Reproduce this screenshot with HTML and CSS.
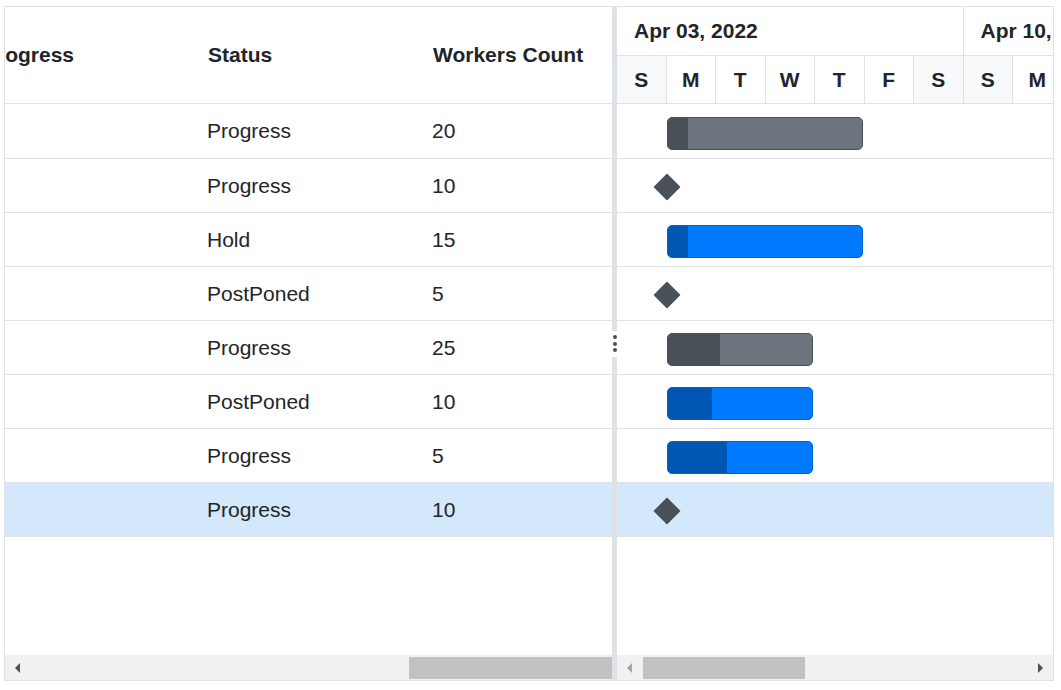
FILE: index.html
```html
<!DOCTYPE html>
<html lang="en">
<head>
<meta charset="utf-8">
<title>Gantt</title>
<link rel="stylesheet" href="styles.css">
</head>
<body>
<div class="gantt">
  <div class="grid-pane">
    <div class="grid-clip">
      <div class="grid-inner">
        <div class="g-header">
          <div class="g-cell">Progress</div>
          <div class="g-cell">Status</div>
          <div class="g-cell">Workers Count</div>
        </div>
        <div class="g-row first"><div class="g-cell"></div><div class="g-cell">Progress</div><div class="g-cell">20</div></div>
        <div class="g-row"><div class="g-cell"></div><div class="g-cell">Progress</div><div class="g-cell">10</div></div>
        <div class="g-row"><div class="g-cell"></div><div class="g-cell">Hold</div><div class="g-cell">15</div></div>
        <div class="g-row"><div class="g-cell"></div><div class="g-cell">PostPoned</div><div class="g-cell">5</div></div>
        <div class="g-row"><div class="g-cell"></div><div class="g-cell">Progress</div><div class="g-cell">25</div></div>
        <div class="g-row"><div class="g-cell"></div><div class="g-cell">PostPoned</div><div class="g-cell">10</div></div>
        <div class="g-row"><div class="g-cell"></div><div class="g-cell">Progress</div><div class="g-cell">5</div></div>
        <div class="g-row selected"><div class="g-cell"></div><div class="g-cell">Progress</div><div class="g-cell">10</div></div>
      </div>
    </div>
    <div class="filler"></div>
    <div class="hscroll">
      <div class="sb-btn"><span class="arr-left dark"></span></div>
      <div class="sb-thumb grid-thumb"></div>
    </div>
  </div>

  <div class="splitter">
    <div class="handle"><span class="dot"></span><span class="dot"></span><span class="dot"></span></div>
  </div>

  <div class="chart-pane">
    <div class="chart-clip">
      <div class="c-header">
        <div class="weeks">
          <div class="week">Apr 03, 2022</div>
          <div class="week">Apr 10, 2022</div>
        </div>
        <div class="days">
          <div class="day weekend">S</div><div class="day">M</div><div class="day">T</div><div class="day">W</div><div class="day">T</div><div class="day">F</div><div class="day weekend">S</div>
          <div class="day weekend">S</div><div class="day">M</div><div class="day">T</div><div class="day">W</div><div class="day">T</div><div class="day">F</div><div class="day weekend">S</div>
        </div>
      </div>
      <div class="c-row first">
        <div class="bar gray" style="margin-left:50px;width:196px"><div class="prog" style="width:20px"></div></div>
      </div>
      <div class="c-row">
        <svg class="milestone" style="margin-left:36px" width="28" height="28" viewBox="0 0 28 28"><polygon points="14,1.5 26.5,14 14,26.5 1.5,14"/></svg>
      </div>
      <div class="c-row">
        <div class="bar blue" style="margin-left:50px;width:196px"><div class="prog" style="width:20px"></div></div>
      </div>
      <div class="c-row">
        <svg class="milestone" style="margin-left:36px" width="28" height="28" viewBox="0 0 28 28"><polygon points="14,1.5 26.5,14 14,26.5 1.5,14"/></svg>
      </div>
      <div class="c-row">
        <div class="bar gray" style="margin-left:50px;width:146px"><div class="prog" style="width:52px"></div></div>
      </div>
      <div class="c-row">
        <div class="bar blue" style="margin-left:50px;width:146px"><div class="prog" style="width:44px"></div></div>
      </div>
      <div class="c-row">
        <div class="bar blue" style="margin-left:50px;width:146px"><div class="prog" style="width:59px"></div></div>
      </div>
      <div class="c-row selected">
        <svg class="milestone" style="margin-left:36px" width="28" height="28" viewBox="0 0 28 28"><polygon points="14,1.5 26.5,14 14,26.5 1.5,14"/></svg>
      </div>
    </div>
    <div class="filler"></div>
    <div class="hscroll">
      <div class="sb-btn"><span class="arr-left light"></span></div>
      <div class="sb-thumb chart-thumb"></div>
      <div class="sb-btn end"><span class="arr-right dark"></span></div>
    </div>
  </div>
</div>
</body>
</html>
```

FILE: styles.css
```css
* { box-sizing: border-box; }

body {
  margin: 0;
  background: #ffffff;
  font-family: "Liberation Sans", Arial, sans-serif;
  color: #212529;
}

.gantt {
  margin: 6px 0 0 4px;
  width: 1050px;
  height: 675px;
  border: 1px solid #dee2e6;
  display: flex;
  background: #ffffff;
}

/* ---------- grid pane ---------- */
.grid-pane {
  width: 607px;
  flex: none;
  display: flex;
  flex-direction: column;
  overflow: hidden;
}

.grid-clip {
  overflow: hidden;
}

.grid-inner {
  margin-left: -34px;
  width: 675px;
}

.g-header,
.g-row {
  display: flex;
  border-bottom: 1px solid #dee2e6;
}

.g-header {
  height: 97px;
  font-weight: bold;
  font-size: 21px;
}

.g-row {
  height: 54px;
  font-size: 21px;
}

.g-row .g-cell { padding-left: 11px; }

.g-row.first { height: 55px; }

.g-row.selected { background: #d4e8fc; }

.g-cell {
  width: 225px;
  flex: none;
  padding: 0 12px;
  display: flex;
  align-items: center;
  white-space: nowrap;
  overflow: hidden;
}

.filler { flex: 1; }

/* ---------- scrollbars ---------- */
.hscroll {
  height: 25px;
  flex: none;
  background: #f1f1f1;
  display: flex;
  align-items: stretch;
}

.sb-btn {
  width: 25px;
  flex: none;
  display: flex;
  align-items: center;
  justify-content: center;
}

.sb-btn.end { margin-left: auto; }

.sb-thumb {
  background: #c1c1c1;
  margin-top: 2px;
  margin-bottom: 1px;
}

.grid-thumb {
  margin-left: auto;
  width: 203px;
}

.chart-thumb {
  margin-left: 1px;
  width: 162px;
}

.arr-left,
.arr-right {
  width: 0;
  height: 0;
  border-top: 5px solid transparent;
  border-bottom: 5px solid transparent;
}

.arr-left { border-right: 5px solid #505050; }
.arr-right { border-left: 5px solid #505050; }
.arr-left.light { border-right-color: #a3a3a3; }

/* ---------- splitter ---------- */
.splitter {
  width: 5px;
  flex: none;
  background: #dee2e6;
  position: relative;
}

.handle {
  position: absolute;
  left: 0;
  top: 50%;
  transform: translateY(-50%);
  width: 5px;
  height: 26px;
  background: #ffffff;
  display: flex;
  flex-direction: column;
  align-items: center;
  justify-content: center;
  gap: 2.5px;
}

.dot {
  width: 4px;
  height: 4px;
  border-radius: 50%;
  background: #495057;
}

/* ---------- chart pane ---------- */
.chart-pane {
  flex: 1;
  min-width: 0;
  display: flex;
  flex-direction: column;
  overflow: hidden;
}

.chart-clip { overflow: hidden; }

.c-header {
  font-weight: bold;
  font-size: 21px;
}

.weeks,
.days {
  display: flex;
  width: 693px;
}

.week {
  width: 346.5px;
  flex: none;
  height: 49px;
  padding-left: 17px;
  display: flex;
  align-items: center;
  border-right: 1px solid #dee2e6;
  border-bottom: 1px solid #dee2e6;
  white-space: nowrap;
}

.day {
  width: 49.5px;
  flex: none;
  height: 48px;
  display: flex;
  align-items: center;
  justify-content: center;
  border-right: 1px solid #dee2e6;
  border-bottom: 1px solid #dee2e6;
}

.day.weekend { background: #f8f9fa; }

.c-row {
  height: 54px;
  display: flex;
  align-items: center;
  border-bottom: 1px solid #dee2e6;
}

.c-row.first { height: 55px; }

.c-row.selected { background: #d4e8fc; }

.bar {
  height: 33px;
  margin-top: 4px;
  border-radius: 5px;
  border: 1px solid;
  overflow: hidden;
  flex: none;
  display: flex;
}

.bar .prog {
  height: 100%;
}

.bar.gray {
  background: #6c757d;
  border-color: #495057;
}

.bar.gray .prog { background: #495057; }

.bar.blue {
  background: #007bff;
  border-color: #0062cc;
}

.bar.blue .prog { background: #0056b3; }

.milestone {
  flex: none;
  margin-top: 3px;
  display: block;
}

.milestone polygon {
  fill: #495057;
  stroke: #495057;
  stroke-width: 1.5;
  stroke-linejoin: round;
}
```
